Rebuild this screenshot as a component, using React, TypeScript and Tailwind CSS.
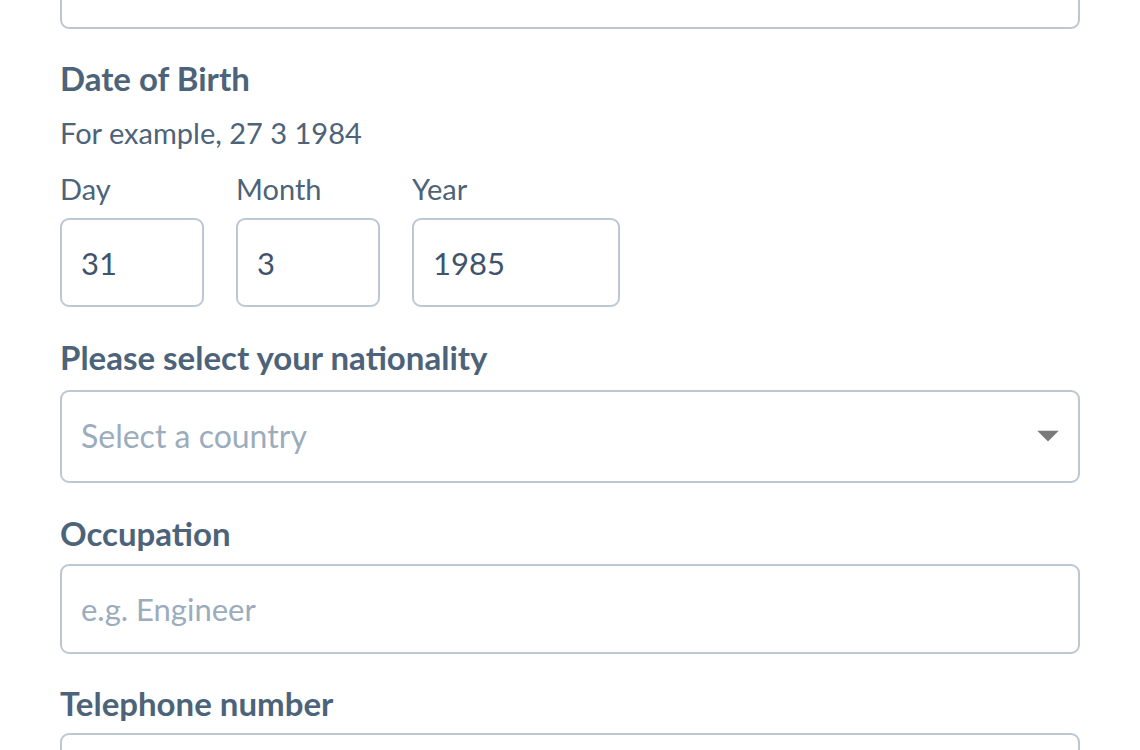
const FIELD =
  'block w-full rounded-[9px] border-2 border-[#bcc7d2] bg-white px-[19px] text-[31px] text-[#3f546a] outline-none placeholder:text-[#9bacbd]';

function Label({ children, className = '' }: { children: React.ReactNode; className?: string }) {
  return <p className={`text-[33px] font-bold leading-[1.2] text-[#4d6379] ${className}`}>{children}</p>;
}

function DatePart({ label, value, width }: { label: string; value: string; width: string }) {
  return (
    <div className={`flex flex-col ${width}`}>
      <span className="text-[29px] leading-[1.2] text-[#4d6379]">{label}</span>
      <input readOnly value={value} className={`${FIELD} mt-[11px] h-[89px]`} />
    </div>
  );
}

export default function App() {
  return (
    <div
      className="h-[750px] w-[1140px] overflow-hidden bg-white"
      style={{ fontFamily: 'Lato, "Open Sans", sans-serif' }}
    >
      <div className="flex flex-col px-[60px]">
        <input readOnly className={`${FIELD} -mt-[60px] h-[89px]`} />

        <Label className="mt-[30px]">Date of Birth</Label>
        <p className="mt-[17px] text-[29px] leading-[1.2] text-[#4d6379]">For example, 27 3 1984</p>

        <div className="mt-[22px] flex gap-[32px]">
          <DatePart label="Day" value="31" width="w-[144px]" />
          <DatePart label="Month" value="3" width="w-[144px]" />
          <DatePart label="Year" value="1985" width="w-[208px]" />
        </div>

        <Label className="mt-[31px]">Please select your nationality</Label>
        <div className="relative mt-[12px]">
          <select
            defaultValue=""
            className={`${FIELD} h-[93px] appearance-none text-[32px] text-[#9bacbd]`}
          >
            <option value="" disabled>
              Select a country
            </option>
          </select>
          <svg
            className="pointer-events-none absolute right-[21px] top-1/2 -translate-y-1/2"
            width="22"
            height="11"
            viewBox="0 0 22 11"
          >
            <path d="M0 0h22L11 11z" fill="#7a7a7a" />
          </svg>
        </div>

        <Label className="mt-[31px]">Occupation</Label>
        <input readOnly placeholder="e.g. Engineer" className={`${FIELD} mt-[11px] h-[90px]`} />

        <Label className="mt-[30px]">Telephone number</Label>
        <input readOnly className={`${FIELD} mt-[9px] h-[89px]`} />
      </div>
    </div>
  );
}
